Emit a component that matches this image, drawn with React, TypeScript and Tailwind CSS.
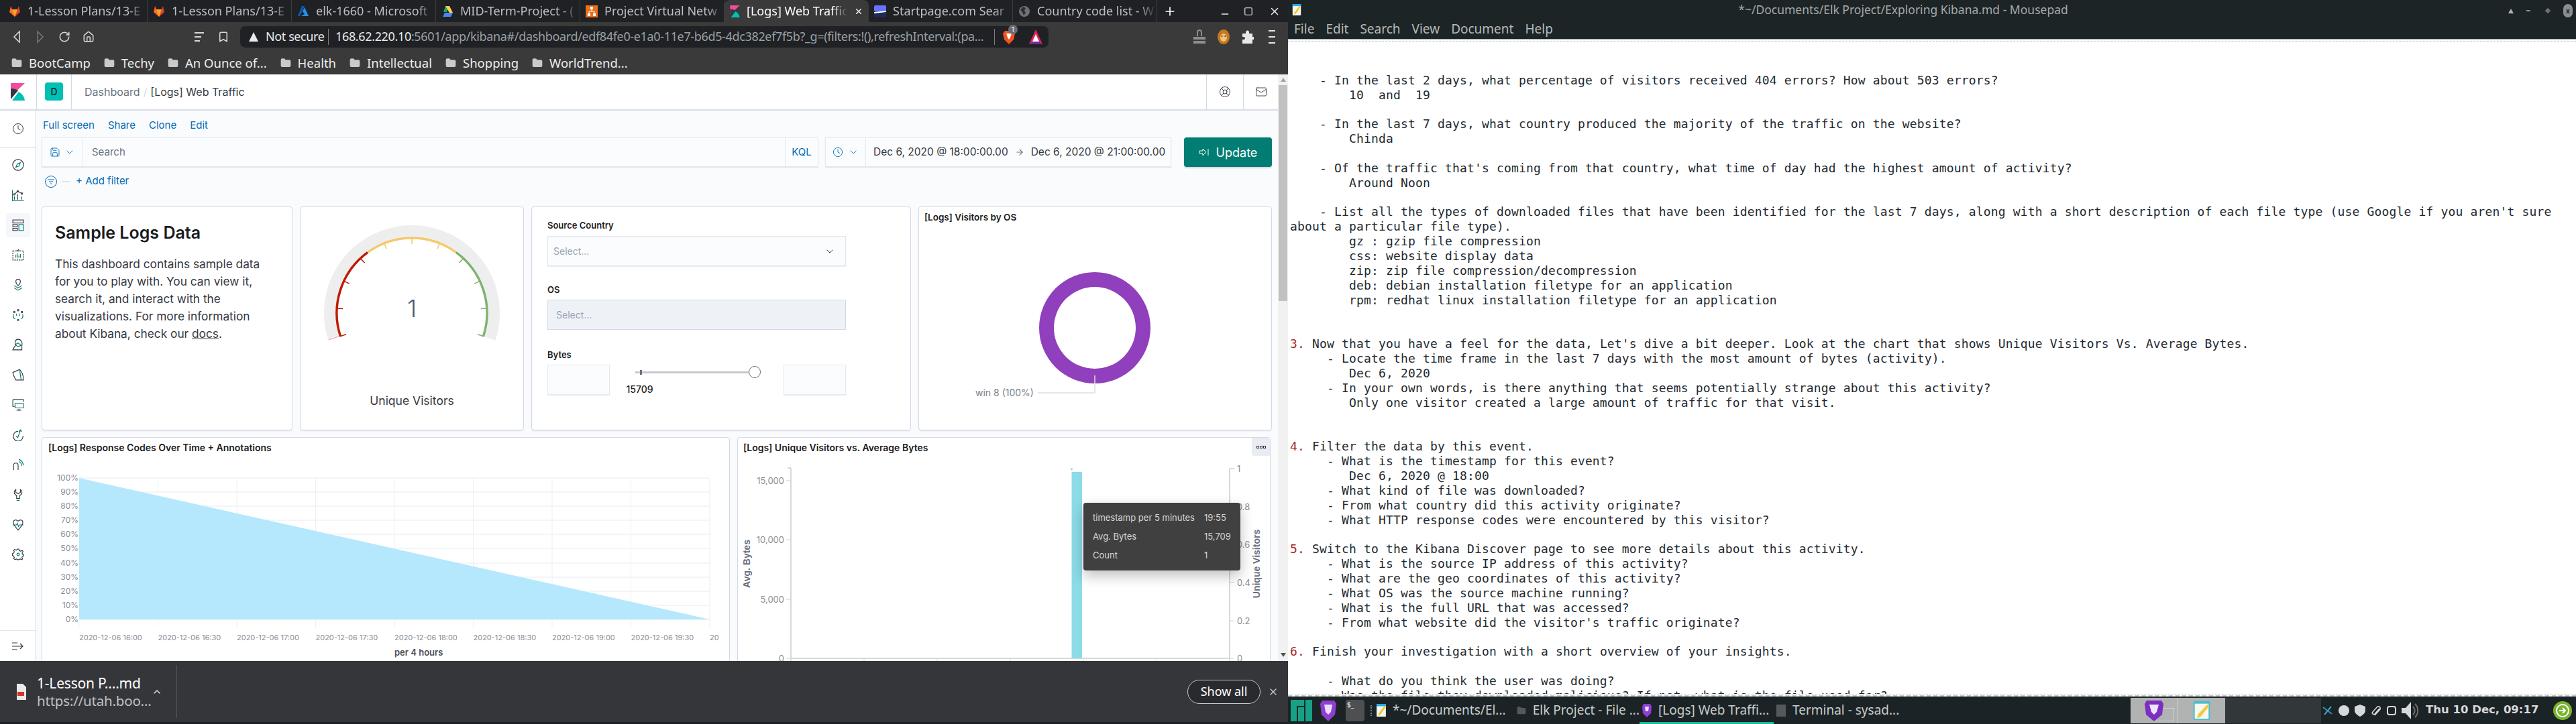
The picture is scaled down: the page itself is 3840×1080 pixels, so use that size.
import React from 'react';
import {
  ArrowRight,
  Bookmark,
  ChevronDown,
  ChevronUp,
  Clock,
  Folder,
  Home,
  LifeBuoy,
  Mail,
  Minus,
  Plus,
  RotateCw,
  Save,
  Square,
  X,
} from 'lucide-react';

const tabs = [
  { id: 'fox1', title: '1-Lesson Plans/13-E' },
  { id: 'fox2', title: '1-Lesson Plans/13-E' },
  { id: 'azure', title: 'elk-1660 - Microsoft' },
  { id: 'drive', title: 'MID-Term-Project - (' },
  { id: 'project', title: 'Project Virtual Netw' },
  { id: 'kibana', title: '[Logs] Web Traffic', active: true },
  { id: 'startpage', title: 'Startpage.com Sear' },
  { id: 'globe', title: 'Country code list - W' },
];

const bookmarks = ['BootCamp', 'Techy', 'An Ounce of...', 'Health', 'Intellectual', 'Shopping', 'WorldTrend...'];

const noteLines = [
  '',
  '',
  '    - In the last 2 days, what percentage of visitors received 404 errors? How about 503 errors?',
  '        10  and  19',
  '',
  "    - In the last 7 days, what country produced the majority of the traffic on the website?",
  '        Chinda',
  '',
  "    - Of the traffic that's coming from that country, what time of day had the highest amount of activity?",
  '        Around Noon',
  '',
  "    - List all the types of downloaded files that have been identified for the last 7 days, along with a short description of each file type (use Google if you aren't sure",
  'about a particular file type).',
  '        gz : gzip file compression',
  '        css: website display data',
  '        zip: zip file compression/decompression',
  '        deb: debian installation filetype for an application',
  '        rpm: redhat linux installation filetype for an application',
  '',
  '',
  "3. Now that you have a feel for the data, Let's dive a bit deeper. Look at the chart that shows Unique Visitors Vs. Average Bytes.",
  '     - Locate the time frame in the last 7 days with the most amount of bytes (activity).',
  '        Dec 6, 2020',
  '     - In your own words, is there anything that seems potentially strange about this activity?',
  '        Only one visitor created a large amount of traffic for that visit.',
  '',
  '',
  '4. Filter the data by this event.',
  '     - What is the timestamp for this event?',
  '        Dec 6, 2020 @ 18:00',
  '     - What kind of file was downloaded?',
  '     - From what country did this activity originate?',
  '     - What HTTP response codes were encountered by this visitor?',
  '',
  '5. Switch to the Kibana Discover page to see more details about this activity.',
  '     - What is the source IP address of this activity?',
  '     - What are the geo coordinates of this activity?',
  '     - What OS was the source machine running?',
  '     - What is the full URL that was accessed?',
  "     - From what website did the visitor's traffic originate?",
  '',
  '6. Finish your investigation with a short overview of your insights.',
  '',
  '     - What do you think the user was doing?',
  '     - Was the file they downloaded malicious? If not, what is the file used for?',
];

const dark = '#343741';
const teal = '#017d73';

function KibanaLogo({ className }: { className?: string }) {
  return (
    <svg viewBox="0 0 21 26" className={className}>
      <path d="M0 0H21L0 20Z" fill="#f04e98" />
      <path d="M0 8C4 8 8 9 11 11L0 24Z" fill="#343741" />
      <path d="M2 26L12 13C17 16 20 20 21 26Z" fill="#00bfb3" />
    </svg>
  );
}

function TabIcon({ id }: { id: string }) {
  if (id === 'fox1' || id === 'fox2') {
    return (
      <svg viewBox="0 0 18 18" className="w-[18px] h-[18px] shrink-0">
        <path d="M9 17L1 10L2 6L3 1L5 6H9Z" fill="#fc6d26" />
        <path d="M9 17L17 10L16 6L15 1L13 6H9Z" fill="#e24329" />
        <path d="M9 17L5 6H13Z" fill="#fca326" />
      </svg>
    );
  }
  if (id === 'azure') {
    return (
      <svg viewBox="0 0 18 18" className="w-[18px] h-[18px] shrink-0">
        <path d="M7 1H11L4 16H1Z" fill="#0a5cb4" />
        <path d="M11 3L17 16H6L11 13L8 9Z" fill="#2a8fe6" />
      </svg>
    );
  }
  if (id === 'drive') {
    return (
      <svg viewBox="0 0 18 18" className="w-[18px] h-[18px] shrink-0">
        <path d="M6 1H12L8 10H3Z" fill="#1fa463" />
        <path d="M6 1H12L17 11H12Z" fill="#ffd04b" />
        <path d="M5 11H17L14 17H2Z" fill="#4688f1" />
      </svg>
    );
  }
  if (id === 'project') {
    return (
      <svg viewBox="0 0 18 18" className="w-[18px] h-[18px] shrink-0">
        <rect width="18" height="18" fill="#e8711c" />
        <path d="M9 5V9M5 13V9H13V13" stroke="#fff" fill="none" />
        <rect x="7" y="2" width="4" height="4" fill="#fff" />
        <rect x="3" y="12" width="4" height="4" fill="#fff" />
        <rect x="11" y="12" width="4" height="4" fill="#fff" />
      </svg>
    );
  }
  if (id === 'kibana') return <KibanaLogo className="w-[15px] h-[18px] shrink-0" />;
  if (id === 'startpage') {
    return (
      <svg viewBox="0 0 18 18" className="w-[18px] h-[18px] shrink-0">
        <rect width="18" height="9" rx="2" fill="#6573ff" />
        <rect y="9" width="18" height="9" rx="2" fill="#202b52" />
        <path d="M0 10L18 8V10L0 12Z" fill="#fff" />
      </svg>
    );
  }
  return (
    <svg viewBox="0 0 18 18" className="w-[18px] h-[18px] shrink-0">
      <circle cx="9" cy="9" r="8" fill="#6e7276" />
      <path d="M7 2L11 4L9 8L11 11L8 15L6 10L3 7Z" fill="#2c2d30" />
    </svg>
  );
}

function BrowserChrome() {
  return (
    <>
      {/* Tab strip */}
      <div className="h-[33px] bg-[#202124] flex items-center pl-[5px] text-[18px] text-[#bdbfc1] shrink-0">
        {tabs.map((tab) => (
          <div
            key={tab.id}
            className={`w-[215px] h-full flex items-center pl-[8px] gap-[10px] shrink-0 border-r ${
              tab.active ? 'bg-[#3a3a3a] rounded-t-lg border-transparent text-white' : 'border-[#3c3d40]'
            }`}
          >
            <TabIcon id={tab.id} />
            <span className="overflow-hidden whitespace-nowrap flex-1 [mask-image:linear-gradient(to_right,black_85%,transparent)]">
              {tab.title}
            </span>
            {tab.active && <X className="w-[14px] h-[14px] text-white mr-[7px] shrink-0" />}
          </div>
        ))}
        <Plus className="w-[20px] h-[20px] ml-[9px] text-white" />
        <div className="flex items-center ml-auto text-[#e8e8e8]">
          <Minus className="w-[16px] h-[16px] mr-[20px] mt-[8px]" />
          <Square className="w-[14px] h-[14px] mr-[23px]" />
          <X className="w-[18px] h-[18px] mr-[11px]" />
        </div>
      </div>

      {/* Toolbar */}
      <div className="h-[43px] bg-[#3a3a3a] flex items-center shrink-0 text-[#d8d8d8]">
        <div className="w-[358px] flex items-center pl-[19px] shrink-0">
          <svg viewBox="0 0 12 20" className="w-[12px] h-[20px]" fill="none" stroke="#e0e0e0" strokeWidth="1.5">
            <path d="M10 2L2 10L10 18Z" />
          </svg>
          <svg viewBox="0 0 12 20" className="w-[12px] h-[20px] ml-[23px]" fill="none" stroke="#77797c" strokeWidth="1.5">
            <path d="M2 2L10 10L2 18Z" />
          </svg>
          <RotateCw className="w-[18px] h-[18px] ml-[21px]" />
          <Home className="w-[18px] h-[18px] ml-[18px]" />
          <svg viewBox="0 0 16 18" className="w-[16px] h-[18px] ml-[148px]" stroke="#d8d8d8" strokeWidth="2">
            <path d="M1 3H15M1 9H11M1 15H9" />
          </svg>
          <Bookmark className="w-[18px] h-[18px] ml-[19px]" />
        </div>
        <div className="w-[1205px] h-[32px] bg-[#202124] rounded-lg flex items-center text-[18px] shrink-0 whitespace-nowrap">
          <svg viewBox="0 0 14 14" className="w-[14px] h-[14px] ml-[13px] shrink-0">
            <path d="M7 0L14 14H0Z" fill="#e8eaed" />
          </svg>
          <span className="ml-[11px] text-[#e8eaed] w-[84px] tracking-[-0.4px]">Not secure</span>
          <span className="w-px h-[24px] bg-[#7a7c80] ml-[9px]" />
          <span className="ml-[10px] w-[967px] overflow-hidden text-[#9aa0a6] tracking-[-0.35px]">
            <span className="text-[#e8eaed]">168.62.220.10</span>
            :5601/app/kibana#/dashboard/edf84fe0-e1a0-11e7-b6d5-4dc382ef7f5b?_g=(filters:!(),refreshInterval:(pa...
          </span>
          <span className="w-px h-[24px] bg-[#7a7c80] ml-[15px]" />
          <div className="relative ml-[12px] w-[18px] h-[22px] shrink-0">
            <svg viewBox="0 0 18 22" className="w-[18px] h-[22px]">
              <path d="M3 2H15L18 6L16 15L9 22L2 15L0 6Z" fill="#f1521f" />
              <path d="M5 6H13L11 12L9 15L7 12Z" fill="#fff" />
            </svg>
            <span className="absolute left-[8px] top-[-7px] w-[14px] h-[14px] rounded-full bg-[#6a6d78] text-white text-[10px] leading-[14px] text-center">
              1
            </span>
          </div>
          <svg viewBox="0 0 20 22" className="w-[20px] h-[22px] ml-[21px] shrink-0">
            <path d="M10 0L20 22H0Z" fill="#e0245e" />
            <path d="M10 7L15 18H5Z" fill="#fff" />
            <path d="M0 22L5 18H15L20 22Z" fill="#6c2d91" />
          </svg>
        </div>
        <div className="flex items-center ml-[216px]">
          <svg viewBox="0 0 18 24" className="w-[18px] h-[24px]" fill="#8b8d90">
            <path d="M5 11V5A4 4 0 0 1 13 5V11H11V5A2 2 0 0 0 7 5V11Z" />
            <rect y="12" width="18" height="4" />
            <rect y="18" width="18" height="4" />
          </svg>
          <svg viewBox="0 0 18 24" className="w-[18px] h-[24px] ml-[18px]">
            <ellipse cx="9" cy="12" rx="9" ry="11" fill="#c8771e" />
            <ellipse cx="9" cy="13" rx="5" ry="6" fill="#f0c27a" />
            <circle cx="6.5" cy="11" r="1" fill="#222" />
            <circle cx="11.5" cy="11" r="1" fill="#222" />
          </svg>
          <svg viewBox="0 0 18 20" className="w-[18px] h-[20px] ml-[18px]" fill="#e8e8e8">
            <path d="M1 5H6V3A2.5 2.5 0 0 1 11 3V5H16V10H18A2 2 0 0 1 18 14H16V20H1V14H3A2 2 0 0 0 3 10H1Z" />
          </svg>
          <svg viewBox="0 0 18 24" className="w-[18px] h-[24px] ml-[18px]" stroke="#e8e8e8" strokeWidth="2">
            <path d="M4 3H14M4 12H14M4 21H14" />
          </svg>
        </div>
      </div>

      {/* Bookmarks bar */}
      <div className="h-[35px] bg-[#3a3a3a] flex items-center pl-[17px] gap-[20px] text-[18.5px] text-[#eceff1] shrink-0 whitespace-nowrap">
        {bookmarks.map((name) => (
          <div key={name} className="flex items-center gap-[10px]">
            <Folder className="w-[16px] h-[16px] text-[#c8cacc] fill-[#c8cacc]" />
            <span>{name}</span>
          </div>
        ))}
      </div>
    </>
  );
}

function NavIcon({ children }: { children: React.ReactNode }) {
  return (
    <svg viewBox="0 0 16 16" className="w-[18px] h-[18px]" fill="none" stroke={dark} strokeWidth="1">
      {children}
    </svg>
  );
}

const navIcons: React.ReactNode[] = [
  <NavIcon key="discover">
    <circle cx="8" cy="8" r="7.2" />
    <path d="M11 5L9.3 9.3L5 11L6.8 6.8Z" stroke={teal} />
  </NavIcon>,
  <NavIcon key="visualize">
    <path d="M.5 1V15.5H15.5" stroke={teal} />
    <path d="M3 7L7.5 3L13 6" />
    <circle cx="3" cy="7" r="1" />
    <circle cx="7.5" cy="3" r="1" />
    <circle cx="13" cy="6" r="1" />
    <path d="M3 10V14M7.5 7V14M12.5 10V14" />
  </NavIcon>,
  <NavIcon key="dashboard">
    <rect x="1" y="1" width="14" height="4" />
    <rect x="1" y="7" width="6" height="3" />
    <rect x="1" y="12" width="6" height="3" />
    <rect x="9" y="7" width="6" height="8" stroke={teal} />
  </NavIcon>,
  <NavIcon key="canvas">
    <path d="M1 3H15V15H1ZM6 3L8 1L10 3" strokeDasharray="2 1" />
    <path d="M5 12V8M7 12V6M9 12V9M11 12V7" stroke={teal} />
  </NavIcon>,
  <NavIcon key="maps">
    <path d="M8 9C5 6 5 4 5 3.5A3 3 0 0 1 11 3.5C11 4 11 6 8 9Z" />
    <path d="M3 9L8 12L13 9M3 12L8 15L13 12" stroke={teal} />
  </NavIcon>,
  <NavIcon key="ml">
    <circle cx="8" cy="1.5" r="1" />
    <circle cx="3" cy="4" r="1" />
    <circle cx="13" cy="4" r="1" />
    <circle cx="8" cy="14.5" r="1" />
    <path d="M6 6V9M10 6V9M2 7C1 10 2 12 4 13M14 7C15 10 14 12 12 13" stroke={teal} />
  </NavIcon>,
  <NavIcon key="graph">
    <path d="M1 15L3 11C5 10 5 9 5 8C3 6 4 1 8 1C12 1 14 5 13 9V15Z" />
    <path d="M4 8L8 6L12 9L8 11Z" stroke={teal} />
  </NavIcon>,
  <NavIcon key="apm">
    <path d="M1 5L10 1C14 5 15 10 15 15H5L2 9Z" />
    <path d="M10 1L12 15" stroke={teal} />
  </NavIcon>,
  <NavIcon key="logs">
    <path d="M1 1H15V4M1 1V10H4M9 15V13M6 15H12" />
    <path d="M4 6H15V12H4Z" stroke={teal} />
  </NavIcon>,
  <NavIcon key="uptime">
    <path d="M8 3A6.5 6.5 0 1 0 14.5 9" />
    <path d="M5 9L7.5 11.5L11 2M9 3.5L11 1L13 3.5" stroke={teal} />
  </NavIcon>,
  <NavIcon key="siem">
    <path d="M2 9A3 3 0 1 1 8 9V15" />
    <path d="M2 9V15" />
    <path d="M9 4A7 7 0 0 1 13 10M9 1A10 10 0 0 1 15 9" stroke={teal} />
  </NavIcon>,
  <NavIcon key="devtools">
    <path d="M5 1V5L8 6.5L11 5V1C14 3 14 7 10 9V13H6V9C2 7 2 3 5 1Z" />
    <path d="M6 15.5H10" stroke={teal} />
  </NavIcon>,
  <NavIcon key="monitoring">
    <path d="M4 10C1 7 1 2 4 1.5C6 1 8 3 8 3C8 3 10 1 12 1.5C15 2 15 7 12 10L8 15Z" />
    <path d="M1 8H6L7 6L8.5 10L10 8H15" stroke={teal} />
  </NavIcon>,
  <NavIcon key="management">
    <path d="M7 1H9L9.5 3L11.5 3.8L13.3 2.7L14.6 4.2L13.3 6L14 8L15.5 8.5V10L13.6 10.8L13 12.5L14 14L12.5 15L10.7 14L9 15L7 15L6 14L4 15L2 13.5L3 12L2 10L.5 9.5V7L2.5 6L2.8 4L2 2.5L3.5 1.5L5.5 2.5Z" />
    <circle cx="8" cy="8" r="1.7" stroke={teal} />
  </NavIcon>,
];

function Sidebar() {
  return (
    <div className="w-[54px] bg-white border-r border-[#d3dae6] flex flex-col shrink-0">
      <div className="h-[55px] border-b border-[#d3dae6] flex items-center justify-center shrink-0">
        <Clock className="w-[18px] h-[18px] text-[#343741]" strokeWidth={1.3} />
      </div>
      <div className="pt-[4px] flex flex-col">
        {navIcons.map((icon, i) => (
          <div key={i} className="h-[44.7px] flex items-center justify-center">
            <div className={`w-[36px] h-[36px] rounded flex items-center justify-center ${i === 2 ? 'bg-[#f5f7fa]' : ''}`}>
              {icon}
            </div>
          </div>
        ))}
      </div>
      <div className="mt-auto h-[46px] border-t border-[#e4e8ef] flex items-center justify-center shrink-0">
        <svg viewBox="0 0 18 14" className="w-[18px] h-[14px]" fill="none" stroke={dark} strokeWidth="1.2">
          <path d="M0 2H8M0 7H16M12 3L16 7L12 11M0 12H8" />
        </svg>
      </div>
    </div>
  );
}

function Panel({ className, children }: { className?: string; children?: React.ReactNode }) {
  return (
    <div className={`bg-white border border-[#d3dae6] rounded shadow-[0_2px_2px_-1px_rgba(152,162,179,0.3)] shrink-0 overflow-hidden ${className ?? ''}`}>
      {children}
    </div>
  );
}

function arcPath(r: number, from: number, to: number) {
  const cx = 614;
  const cy = 467;
  const p = (a: number) => {
    const rad = (a * Math.PI) / 180;
    return `${cx + r * Math.sin(rad)} ${cy - r * Math.cos(rad)}`;
  };
  return `M${p(from)} A${r} ${r} 0 ${to - from > 180 ? 1 : 0} 1 ${p(to)}`;
}

function tickPath(a: number) {
  const rad = (a * Math.PI) / 180;
  const s = Math.sin(rad);
  const c = Math.cos(rad);
  return `M${614 + 113 * s} ${467 - 113 * c} L${614 + 103 * s} ${467 - 103 * c}`;
}

function Gauge() {
  const ticks = [-108, -86.4, -64.8, -43.2, -21.6, 0, 21.6, 43.2, 64.8, 86.4, 108];
  const tickColor = (a: number) => (a < -36 ? '#bd1d00' : a > 36 ? '#7fb26f' : '#f5c86b');
  return (
    <svg viewBox="448 309 332 332" className="w-[332px] h-[332px] block">
      <path d={arcPath(122.5, -108, 108)} fill="none" stroke="#eeeeee" strokeWidth="17" />
      <path d={arcPath(112, -108, -36)} fill="none" stroke="#bd1d00" strokeWidth="3.5" />
      <path d={arcPath(112, -36, 36)} fill="none" stroke="#f5c86b" strokeWidth="3.5" />
      <path d={arcPath(112, 36, 108)} fill="none" stroke="#7fb26f" strokeWidth="3.5" />
      {ticks.map((a) => (
        <path key={a} d={tickPath(a)} stroke={tickColor(a)} strokeWidth="1.5" />
      ))}
      <path d="M490 507L505 502" stroke="#e8a79a" strokeWidth="1" />
      <text x="614" y="473" textAnchor="middle" fontSize="36" fontWeight="300" fill="#4f5a68">1</text>
      <text x="614" y="604" textAnchor="middle" fontSize="17.5" fill="#343741">Unique Visitors</text>
    </svg>
  );
}

function Controls() {
  return (
    <div className="pl-[23px] pr-[96px] pt-[19px] text-[13px] font-semibold text-[#1a1c21]">
      <div className="h-[16px] leading-[16px]">Source Country</div>
      <div className="mt-[8px] h-[45px] bg-[#fbfcfd] border border-[#dfe4ed] shadow-[0_1px_1px_rgba(152,162,179,0.2)] flex items-center justify-between pl-[8px] pr-[15px] text-[14px] font-normal text-[#98a2b3]">
        <span>Select...</span>
        <ChevronDown className="w-[16px] h-[16px] text-[#343741]" strokeWidth={1.5} />
      </div>
      <div className="mt-[27px] h-[16px] leading-[16px]">OS</div>
      <div className="mt-[7px] h-[45px] bg-[#eef2f7] border border-[#d3dae6] flex items-center pl-[12px] text-[14px] font-normal text-[#98a2b3]">
        Select...
      </div>
      <div className="mt-[29px] h-[16px] leading-[16px]">Bytes</div>
      <div className="mt-[7px] flex justify-between">
        <div className="w-[93px] h-[45px] bg-[#fbfcfd] border border-[#e4e8ef] shadow-[0_1px_1px_rgba(152,162,179,0.2)]" />
        <div className="w-[178px] relative">
          <div className="absolute left-[-3px] top-[10px] w-[176px] h-[3px] bg-[#c4c8cd]" />
          <div className="absolute left-[4px] top-[8px] w-[3px] h-[7px] bg-[#69707d]" />
          <div className="absolute left-[166px] top-[2px] w-[18px] h-[18px] rounded-full bg-white border border-[#69707d]" />
          <div className="absolute left-[-16px] top-[26px] text-[14px] font-medium text-[#1a1c21]">15709</div>
        </div>
        <div className="w-[93px] h-[45px] bg-[#fbfcfd] border border-[#e4e8ef] shadow-[0_1px_1px_rgba(152,162,179,0.2)]" />
      </div>
    </div>
  );
}

function VisitorsByOs() {
  return (
    <>
      <div className="px-[8px] pt-[5px] text-[13.5px] font-semibold text-[#1a1c21] h-[24px]">[Logs] Visitors by OS</div>
      <svg viewBox="1370 333 525 308" className="w-[525px] h-[308px] block">
        <path
          fillRule="evenodd"
          d="M1549 489a83 83 0 1 0 166 0a83 83 0 1 0 -166 0ZM1571 489a61 61 0 1 1 122 0a61 61 0 1 1 -122 0Z"
          fill="#9040bc"
        />
        <path d="M1632 560V586H1547" fill="none" stroke="#dedede" strokeWidth="1.5" />
        <text x="1454" y="591" fontSize="14" fill="#7b8088">win 8 (100%)</text>
      </svg>
    </>
  );
}

function ResponseCodes() {
  const rows = [713, 734, 755, 776, 797, 818, 840, 861, 882, 903, 924];
  const pct = ['100%', '90%', '80%', '70%', '60%', '50%', '40%', '30%', '20%', '10%', '0%'];
  const cols = [119, 236.5, 354, 471.5, 589, 706.5, 824, 941.5, 1059];
  const times = ['16:00', '16:30', '17:00', '17:30', '18:00', '18:30', '19:00', '19:30', ''];
  return (
    <>
      <div className="px-[9px] pt-[4px] text-[14px] font-semibold text-[#1a1c21] h-[29px] whitespace-nowrap">
        [Logs] Response Codes Over Time + Annotations
      </div>
      <svg viewBox="64 682 1024 320" className="w-[1024px] h-[320px] block">
        {rows.map((y) => (
          <path key={y} d={`M119 ${y}H1059`} stroke="#f1f2f3" strokeWidth="1.5" />
        ))}
        {cols.map((x) => (
          <path key={x} d={`M${x} 713V936`} stroke="#eeeff1" strokeWidth="1" />
        ))}
        <path d="M119 713L1059 924H119Z" fill="#b5e8fd" />
        {rows.map((y, i) => (
          <text key={y} x="118" y={y + 4} textAnchor="end" fontSize="12" fill="#8a8d93">{pct[i]}</text>
        ))}
        {cols.map((x, i) => (
          <text key={x} x={x} y="955" fontSize="11" fill="#8a8d93">
            {times[i] ? `2020-12-06 ${times[i]}` : '20'}
          </text>
        ))}
        <text x="589" y="978" fontSize="13" fontWeight="600" fill="#4a4d55">per 4 hours</text>
      </svg>
    </>
  );
}

function UniqueVisitors() {
  return (
    <>
      <div className="px-[8px] pt-[4px] text-[14px] font-semibold text-[#1a1c21] h-[29px]">[Logs] Unique Visitors vs. Average Bytes</div>
      <div className="absolute right-0 top-0 w-[27px] h-[27px] bg-[#e9edf3] rounded-bl flex items-center justify-center gap-px">
        <span className="w-[4px] h-[4px] border border-[#343741]" />
        <span className="w-[4px] h-[4px] border border-[#343741]" />
        <span className="w-[4px] h-[4px] border border-[#343741]" />
      </div>
      <svg viewBox="1101 682 793 320" className="w-[793px] h-[320px] block">
        <path d="M1180 698V990M1175 698H1180M1834 699V990M1834 699H1841M1180 982H1834" fill="none" stroke="#d9d9d9" strokeWidth="2" />
        {[717, 805, 894, 982].map((y) => (
          <path key={y} d={`M1173 ${y}H1180`} stroke="#d0d0d0" />
        ))}
        {[756, 812, 869, 926, 982].map((y) => (
          <path key={y} d={`M1834 ${y}H1841`} stroke="#d0d0d0" />
        ))}
        {[1289, 1398, 1507, 1616, 1725].map((x) => (
          <path key={x} d={`M${x} 982V990`} stroke="#d0d0d0" />
        ))}
        {[['15,000', 717], ['10,000', 805], ['5,000', 894], ['0', 982]].map(([label, y]) => (
          <text key={label} x="1170" y={Number(y) + 5} textAnchor="end" fontSize="13" fill="#8a8d93">{label}</text>
        ))}
        {[['1', 699], ['0.8', 756], ['0.6', 812], ['0.4', 869], ['0.2', 926], ['0', 982]].map(([label, y]) => (
          <text key={label} x="1845" y={Number(y) + 5} fontSize="13" fill="#8a8d93">{label}</text>
        ))}
        <rect x="1598.5" y="704" width="15.5" height="278" fill="#8cdbe8" />
        <path d="M1596 699H1601L1598.5 701Z" fill="#98a2b3" />
        <text transform="translate(1119 841) rotate(-90)" textAnchor="middle" fontSize="14" fontWeight="700" fill="#69707d" className="[font-family:'Liberation_Sans',sans-serif]">Avg. Bytes</text>
        <text transform="translate(1879 841) rotate(-90)" textAnchor="middle" fontSize="14" fontWeight="700" fill="#69707d" className="[font-family:'Liberation_Sans',sans-serif]">Unique Visitors</text>
      </svg>
      <div className="absolute left-[515px] top-[97px] w-[234px] h-[101px] bg-[#404040] rounded shadow-[0_8px_20px_rgba(0,0,0,0.25)] px-[14px] py-[8px] text-[13px] text-[#d6d6d6]">
        <div className="grid grid-cols-[166px_1fr] leading-[28px] whitespace-nowrap">
          <span>timestamp per 5 minutes</span>
          <span>19:55</span>
          <span>Avg. Bytes</span>
          <span>15,709</span>
          <span>Count</span>
          <span>1</span>
        </div>
      </div>
    </>
  );
}

function Kibana() {
  return (
    <div className="flex-1 flex min-h-0 [font-family:Inter,sans-serif]">
      <div className="flex-1 flex flex-col min-w-0">
        {/* Header */}
        <div className="h-[54px] bg-white border-b-2 border-[#d8dde6] flex shrink-0 items-stretch">
          <div className="w-[54px] flex items-center justify-center pr-[1px] shrink-0">
            <KibanaLogo className="w-[21px] h-[26px]" />
          </div>
          <div className="w-[53px] border-l border-r border-[#d3dae6] flex items-center justify-center shrink-0">
            <div className="w-[27px] h-[27px] rounded bg-[#00bfb3] text-[#1a1c21] text-[14px] font-medium flex items-center justify-center mb-[1px]">
              D
            </div>
          </div>
          <div className="flex items-center pl-[19px] text-[16px] whitespace-nowrap">
            <span className="text-[#69707d]">Dashboard</span>
            <span className="text-[#d3dae6] mx-[5px]">/</span>
            <span className="text-[#343741]">[Logs] Web Traffic</span>
          </div>
          <div className="ml-auto flex">
            <div className="w-[55px] border-l border-[#d3dae6] flex items-center justify-center">
              <LifeBuoy className="w-[18px] h-[18px] text-[#343741]" strokeWidth={1.2} />
            </div>
            <div className="w-[52px] border-l border-[#d3dae6] flex items-center justify-center">
              <Mail className="w-[18px] h-[18px] text-[#343741]" strokeWidth={1.2} />
            </div>
          </div>
        </div>

        <div className="flex-1 flex min-h-0">
          <Sidebar />
          <div className="flex-1 min-w-0 bg-[#fafbfd] pl-[8px] pr-[9px] overflow-hidden">
            {/* Actions */}
            <div className="h-[40px] flex items-center pt-[4px] pl-[2px] gap-[20px] text-[15px] text-[#006bb4]">
              <span>Full screen</span>
              <span>Share</span>
              <span>Clone</span>
              <span>Edit</span>
            </div>

            {/* Query bar */}
            <div className="flex h-[44px]">
              <div className="w-[1158px] flex bg-[#fbfcfd] border border-[#e4e8ef] shadow-[0_1px_1px_rgba(152,162,179,0.25)] shrink-0">
                <div className="w-[61px] border-r border-[#e4e8ef] flex items-center pl-[11px] gap-[6px] text-[#006bb4]">
                  <Save className="w-[16px] h-[16px]" strokeWidth={1.3} />
                  <ChevronDown className="w-[16px] h-[16px]" strokeWidth={1.3} />
                </div>
                <div className="flex-1 flex items-center pl-[13px] text-[15px] text-[#69707d]">Search</div>
                <div className="w-[49px] border-l border-[#e4e8ef] flex items-center justify-center text-[15px] text-[#006bb4]">KQL</div>
              </div>
              <div className="w-[516px] ml-[10px] flex bg-[#fbfcfd] border border-[#e4e8ef] shadow-[0_1px_1px_rgba(152,162,179,0.25)] shrink-0">
                <div className="w-[60px] border-r border-[#e4e8ef] flex items-center pl-[10px] gap-[7px] text-[#006bb4]">
                  <Clock className="w-[16px] h-[16px]" strokeWidth={1.3} />
                  <ChevronDown className="w-[16px] h-[16px]" strokeWidth={1.3} />
                </div>
                <div className="flex-1 flex items-center pl-[11px] text-[15.5px] text-[#343741] whitespace-nowrap">
                  <span>Dec 6, 2020 @ 18:00:00.00</span>
                  <ArrowRight className="w-[14px] h-[14px] mx-[10px] text-[#69707d]" />
                  <span>Dec 6, 2020 @ 21:00:00.00</span>
                </div>
              </div>
              <div className="w-[131px] ml-[19px] bg-[#017d73] rounded flex items-center justify-center gap-[10px] text-[18px] text-white shadow-[0_2px_2px_rgba(0,0,0,0.15)] shrink-0">
                <svg viewBox="0 0 16 16" className="w-[16px] h-[16px]" fill="none" stroke="#fff">
                  <path d="M1 6H6V3L11 8L6 13V10H1ZM14 3V13" />
                </svg>
                Update
              </div>
            </div>

            {/* Filter row */}
            <div className="h-[59px] flex items-center pb-[16px] pl-[5px] text-[15px] text-[#006bb4]">
              <svg viewBox="0 0 18 18" className="w-[18px] h-[18px]" fill="none" stroke="#006bb4">
                <circle cx="9" cy="9" r="8.5" />
                <path d="M4 6H14M6 9H12M8 12H10" />
              </svg>
              <span className="w-[12px] h-px bg-[#d3dae6] ml-[7px]" />
              <span className="ml-[9px]">+ Add filter</span>
            </div>

            {/* Panels */}
            <div className="flex gap-[11px]">
              <Panel className="w-[374px] h-[334px] px-[19px] pt-[22px] text-[#343741]">
                <h1 className="text-[25px] leading-[32px] font-semibold text-[#1a1c21] whitespace-nowrap">Sample Logs Data</h1>
                <p className="max-w-[325px] text-[17.3px] leading-[26px] mt-[18px]">
                  This dashboard contains sample data for you to play with. You can view it, search it, and interact with the visualizations. For more information about Kibana, check our <u>docs</u>.
                </p>
              </Panel>
              <Panel className="w-[334px] h-[334px]">
                <Gauge />
              </Panel>
              <Panel className="w-[566px] h-[334px]">
                <Controls />
              </Panel>
              <Panel className="w-[527px] h-[334px]">
                <VisitorsByOs />
              </Panel>
            </div>
            <div className="flex gap-[11px] mt-[10px]">
              <Panel className="w-[1026px] h-[360px]">
                <ResponseCodes />
              </Panel>
              <Panel className="w-[795px] h-[360px] relative">
                <UniqueVisitors />
              </Panel>
            </div>
          </div>
        </div>
      </div>

      {/* Scrollbar */}
      <div className="w-[15px] bg-[#f1f1f1] flex flex-col items-center shrink-0 relative">
        <div className="mt-[5px] w-0 h-0 border-x-[4px] border-x-transparent border-b-[6px] border-b-[#a3a3a3]" />
        <div className="mt-[5px] w-[13px] h-[322px] bg-[#c1c1c1]" />
        <div className="mt-auto mb-[6px] w-0 h-0 border-x-[4px] border-x-transparent border-t-[6px] border-t-[#505050]" />
      </div>
    </div>
  );
}

function DownloadShelf() {
  return (
    <>
      <div className="h-[91px] bg-[#35363a] flex items-center shrink-0 pr-[14px] [font-family:'Noto_Sans',sans-serif]">
        <div className="w-[264px] h-[79px] border-r border-[#55565a] flex items-center shrink-0">
          <svg viewBox="0 0 14 24" className="w-[14px] h-[24px] ml-[25px] shrink-0">
            <path d="M0 0H9L14 5V24H0Z" fill="#e8eaed" />
            <rect x="1" y="12" width="10" height="6" fill="#d93025" />
          </svg>
          <div className="ml-[16px] w-[155px] whitespace-nowrap leading-[26px]">
            <div className="text-[21px] text-white tracking-[-0.2px]">1-Lesson P....md</div>
            <div className="text-[20.5px] text-[#bdc1c6] tracking-[-0.2px]">https://utah.boo...</div>
          </div>
          <ChevronUp className="w-[16px] h-[16px] text-[#e8eaed] ml-[16px]" />
        </div>
        <div className="ml-auto w-[109px] h-[36px] rounded-full bg-[#292a2d] border border-[#c8c9cb] flex items-center justify-center text-[18px] text-white">
          Show all
        </div>
        <X className="w-[16px] h-[16px] text-[#c8c9cb] ml-[11px]" />
      </div>
      <div className="h-[3px] bg-[#1c2326] shrink-0" />
    </>
  );
}

function NoteLine({ text }: { text: string }) {
  const match = text.match(/^(\d\.)(.*)$/);
  return (
    <div className="h-[21.86px] leading-[21.86px] whitespace-pre">
      {match ? (
        <>
          <span className="text-[#a52a2a]">{match[1]}</span>
          {match[2]}
        </>
      ) : (
        text || ' '
      )}
    </div>
  );
}

function NotepadIcon({ className }: { className?: string }) {
  return (
    <svg viewBox="0 0 16 22" className={className}>
      <rect width="16" height="22" rx="1" fill="#f6f6f0" />
      <rect width="16" height="4" fill="#29a9e0" />
      <path d="M13 4L15 6L6 19L3 20L4 16Z" fill="#f5c518" />
    </svg>
  );
}

function Mousepad() {
  return (
    <div className="flex-1 flex flex-col min-h-0 bg-[#1d2426]">
      <div className="h-[29px] relative flex items-center justify-center shrink-0 text-[17.5px] text-[#a4a9aa] [font-family:'Noto_Sans',sans-serif]">
        <NotepadIcon className="absolute left-[6px] top-[6px] w-[14px] h-[17px]" />
        <span className="mr-[86px]">*~/Documents/Elk Project/Exploring Kibana.md - Mousepad</span>
        <div className="absolute right-[5px] top-[6px] flex items-center text-[#b0b4b5]">
          <div className="w-0 h-0 border-x-[4px] border-x-transparent border-b-[7px] border-b-[#b0b4b5]" />
          <div className="w-[6px] h-[2px] bg-[#8a8f90] ml-[19px]" />
          <div className="w-[6px] h-[6px] bg-[#6c7172] ml-[23px] rotate-45" />
          <div className="w-[14px] h-[20px] rounded-full bg-[#8a8f90] ml-[20px] flex items-center justify-center text-[#1d2426] text-[10px] font-bold">
            x
          </div>
        </div>
      </div>
      <div className="h-[29px] flex items-center pl-[9px] gap-[17px] text-[19px] text-[#b6baba] shrink-0 [font-family:'Noto_Sans',sans-serif]">
        <span>File</span>
        <span>Edit</span>
        <span>Search</span>
        <span>View</span>
        <span>Document</span>
        <span>Help</span>
      </div>
      <div className="flex-1 min-h-0 bg-white border-t-[2px] border-[#c9cccc] flex flex-col">
        <div className="mt-[1px] border-t border-dashed border-[#c9c9c9] shrink-0" />
        <div className="flex-1 min-h-0 overflow-hidden pl-[3px] pt-[3px] text-[18px] tracking-[0.16px] text-[#1f2a30] [font-family:'DejaVu_Sans_Mono',monospace]">
          {noteLines.map((line, i) => (
            <NoteLine key={i} text={line} />
          ))}
        </div>
        <div className="h-[4px] border-t border-dashed border-[#c9c9c9] border-b-[2px] border-b-[#c9cccc] shrink-0" />
      </div>
    </div>
  );
}

function TaskEntry({ icon, title, active }: { icon: React.ReactNode; title: string; active?: boolean }) {
  return (
    <div className={`w-[200px] h-full flex items-center gap-[10px] pl-[4px] whitespace-nowrap border-b-[3px] pt-[3px] shrink-0 ${active ? 'border-[#1abc9c]' : 'border-transparent'}`}>
      {icon}
      <span>{title}</span>
    </div>
  );
}

function Taskbar() {
  return (
    <div className="h-[41px] bg-[#1c2326] flex items-center shrink-0 text-[19px] text-[#c8cccc] [font-family:'Noto_Sans',sans-serif]">
      <svg viewBox="0 0 32 32" className="w-[32px] h-[32px] ml-[4px] shrink-0" fill="#16a085">
        <rect width="20" height="9" />
        <rect y="0" width="9" height="32" />
        <rect x="11" y="11" width="9" height="21" />
        <rect x="22" width="10" height="32" />
      </svg>
      <svg viewBox="0 0 24 32" className="w-[24px] h-[32px] ml-[12px] shrink-0">
        <path d="M3 1H21L24 6L22 22L12 32L2 22L0 6Z" fill="#8e3fd0" />
        <path d="M6 7H18L16 18L12 22L8 18Z" fill="#ecdcff" />
      </svg>
      <div className="w-[28px] h-[32px] ml-[14px] bg-[#4d4f51] rounded-sm text-[10px] text-white pl-[2px] shrink-0">$_</div>
      <div className="w-[2px] h-[16px] ml-[9px] border-l-2 border-dotted border-[#7a7f80] shrink-0" />
      <div className="ml-[7px] flex h-full w-[392px] items-center gap-[10px] shrink-0 whitespace-nowrap">
        <NotepadIcon className="w-[14px] h-[19px] shrink-0" />
        <span className="w-[176px] overflow-hidden">*~/Documents/El...</span>
        <Folder className="w-[14px] h-[18px] text-[#55595b] fill-[#55595b] shrink-0" />
        <span>Elk Project - File ...</span>
      </div>
      <TaskEntry
        active
        title="[Logs] Web Traffi..."
        icon={
          <svg viewBox="0 0 14 20" className="w-[14px] h-[20px] shrink-0">
            <path d="M2 0H12L14 4L13 14L7 20L1 14L0 4Z" fill="#8e3fd0" />
            <path d="M4 4H10L9 11H5Z" fill="#ecdcff" />
          </svg>
        }
      />
      <TaskEntry
        title="Terminal - sysad..."
        icon={<div className="w-[14px] h-[18px] bg-[#55595b] shrink-0" />}
      />
      {/* Pager */}
      <div className="ml-auto flex h-[38px] w-[284px] bg-[#32373a] shrink-0">
        <div className="w-[70px] bg-[#b0b3b2] flex items-center justify-center relative">
          <div className="absolute right-[5px] top-[15px] w-[32px] h-[20px] border border-[#d0d2d1]" />
          <svg viewBox="0 0 28 32" className="w-[28px] h-[32px] relative">
            <path d="M3 1H25L28 6L26 22L14 32L2 22L0 6Z" fill="#7b2fc0" />
            <path d="M7 7H21L18 18L14 22L10 18Z" fill="#efe3ff" />
          </svg>
        </div>
        <div className="w-[71px] bg-[#b0b3b2] border-l border-[#d0d2d1] flex items-center justify-center">
          <svg viewBox="0 0 26 32" className="w-[26px] h-[30px]">
            <rect y="1" width="26" height="30" rx="2" fill="#45bfcf" />
            <rect x="2" y="5" width="22" height="24" fill="#f8f8ef" />
            <path d="M22 6L25 9L11 26L6 28L7 22Z" fill="#f5c842" />
          </svg>
        </div>
      </div>
      {/* Tray */}
      <div className="w-[380px] flex items-center gap-[8px] pl-[2px] pr-[6px] text-[#d6d9d9] whitespace-nowrap shrink-0">
        <svg viewBox="0 0 16 16" className="w-[16px] h-[16px] shrink-0" fill="none" strokeWidth="2">
          <path d="M1 3L14 13" stroke="#2a9d8f" />
          <path d="M13 2L3 14" stroke="#4a90d9" />
        </svg>
        <div className="w-[16px] h-[16px] rounded-full bg-[#d6d9d9] shrink-0" />
        <svg viewBox="0 0 16 18" className="w-[16px] h-[18px] shrink-0" fill="#d6d9d9">
          <path d="M8 0L16 3V9C16 13 12 16 8 18C4 16 0 13 0 9V3Z" />
        </svg>
        <svg viewBox="0 0 16 18" className="w-[16px] h-[18px] shrink-0" fill="none" stroke="#d6d9d9" strokeWidth="1.5">
          <path d="M13 6L6 14A2 2 0 0 1 3 11L10 3A3 3 0 0 1 14 7L6 16" />
        </svg>
        <div className="w-[14px] h-[14px] bg-[#1c2326] border-2 border-[#d6d9d9] rounded-sm shrink-0" />
        <svg viewBox="0 0 28 28" className="w-[28px] h-[28px] shrink-0">
          <path d="M0 10H6L14 1V27L6 18H0Z" fill="#d6d9d9" />
          <path d="M17 8A8 8 0 0 1 17 20" fill="none" stroke="#6a6e70" strokeWidth="2" />
          <path d="M20 4A14 14 0 0 1 20 24" fill="none" stroke="#6a6e70" strokeWidth="2" />
        </svg>
        <span className="text-[16.5px] font-semibold [font-family:'DejaVu_Sans',sans-serif]">Thu 10 Dec, 09:17</span>
        <svg viewBox="0 0 28 28" className="w-[28px] h-[28px] shrink-0 ml-auto">
          <circle cx="14" cy="14" r="14" fill="#7ab32e" />
          <circle cx="14" cy="14" r="9" fill="none" stroke="#fff" strokeWidth="2" />
          <path d="M9 14H18M14 10L18 14L14 18" fill="none" stroke="#fff" strokeWidth="2" />
        </svg>
      </div>
    </div>
  );
}

export default function App() {
  return (
    <div className="w-[3840px] h-[1080px] overflow-hidden flex flex-col bg-[#1c2326]">
      <div className="flex-1 flex min-h-0">
        <div className="w-[1920px] flex flex-col shrink-0 relative">
          <div className="[font-family:'Noto_Sans',sans-serif]">
            <BrowserChrome />
          </div>
          <Kibana />
          <DownloadShelf />
        </div>
        <div className="w-[1920px] flex flex-col shrink-0">
          <div className="flex-1 flex flex-col min-h-0">
            <Mousepad />
          </div>
          <Taskbar />
        </div>
      </div>
    </div>
  );
}
